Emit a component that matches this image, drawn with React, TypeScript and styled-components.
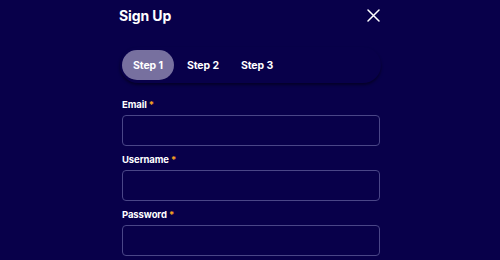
import React, { FC, useState } from "react";
import styled, { createGlobalStyle } from "styled-components";

const GlobalStyle = createGlobalStyle`
  html, body {
    margin: 0;
    padding: 0;
    background: #08004a;
  }
  body {
    font-family: "Inter", "Noto Sans", sans-serif;
    color: #ffffff;
  }
`;

const steps = ["Step 1", "Step 2", "Step 3"];
const fields = ["Email", "Username", "Password"];

const App: FC = () => {
  const [active, setActive] = useState(0);
  return (
    <>
      <GlobalStyle />
      <Modal>
        <Header>
          <Title>Sign Up</Title>
          <CloseButton aria-label="Close">
            <svg width="13" height="13" viewBox="0 0 13 13">
              <path
                d="M1 1 L12 12 M12 1 L1 12"
                stroke="#ffffff"
                strokeWidth="1.5"
                strokeLinecap="round"
              />
            </svg>
          </CloseButton>
        </Header>
        <Tabs>
          {steps.map((s, i) => (
            <Tab key={s} $active={i === active} onClick={() => setActive(i)}>
              {s}
            </Tab>
          ))}
        </Tabs>
        <Form>
          {fields.map((f) => (
            <Field key={f}>
              <Label>
                {f} <Required>*</Required>
              </Label>
              <Input type={f === "Password" ? "password" : "text"} />
            </Field>
          ))}
        </Form>
      </Modal>
    </>
  );
};

const Modal = styled.div`
  width: 262px;
  margin-left: 119px;
  display: flex;
  flex-direction: column;
`;

const Header = styled.div`
  display: flex;
  align-items: center;
  justify-content: space-between;
  height: 30px;
  padding-right: 1px;
`;

const Title = styled.h2`
  margin: 0;
  font-size: 14px;
  font-weight: 700;
  letter-spacing: -0.1px;
`;

const CloseButton = styled.button`
  background: none;
  border: none;
  padding: 0;
  display: flex;
  cursor: pointer;
`;

const Tabs = styled.div`
  margin-top: 17px;
  margin-left: 1px;
  display: flex;
  align-items: center;
  padding: 3px 2px;
  border-radius: 18px;
  box-shadow: 0 2px 3px rgba(0, 0, 0, 0.45);
`;

const Tab = styled.button<{ $active: boolean }>`
  height: 30px;
  padding: 0 11px;
  margin-right: ${(p) => (p.$active ? "2px" : "0")};
  border: none;
  border-radius: 15px;
  background: ${(p) => (p.$active ? "#77709f" : "transparent")};
  color: #ffffff;
  font-family: inherit;
  font-size: 10.5px;
  font-weight: 700;
  letter-spacing: -0.1px;
  cursor: pointer;
`;

const Form = styled.div`
  margin-top: 16px;
  margin-left: 3px;
  display: flex;
  flex-direction: column;
  gap: 8px;
`;

const Field = styled.div`
  display: flex;
  flex-direction: column;
  gap: 4px;
`;

const Label = styled.label`
  font-size: 9.5px;
  font-weight: 700;
  line-height: 12px;
  letter-spacing: -0.1px;
`;

const Required = styled.span`
  color: #f5a020;
`;

const Input = styled.input`
  box-sizing: border-box;
  width: 258px;
  height: 31px;
  background: transparent;
  border: 1.5px solid #4a4687;
  border-radius: 4px;
  color: #ffffff;
  outline: none;
`;

export default App;
